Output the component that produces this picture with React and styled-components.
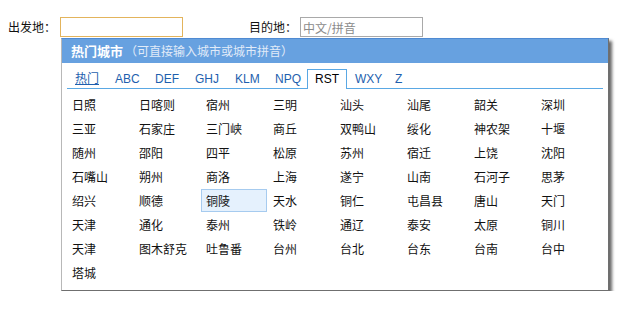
import { useState } from "react";
import styled, { createGlobalStyle } from "styled-components";

const GlobalStyle = createGlobalStyle`
    body {
        margin: 8px;
        background: #fff;
        font-family: "Noto Sans CJK SC", "Liberation Sans", sans-serif;
        font-size: 12px;
        color: #000;
    }
`;

const Page = styled.div`
    display: flex;
    flex-direction: column;
    padding-top: 9px;
`;

const Form = styled.div`
    display: flex;
    align-items: center;
`;

const Field = styled.div`
    display: flex;
    align-items: center;
    margin-right: ${props => props.$gap || 0}px;
`;

const Label = styled.label`
    width: ${props => props.$width}px;
    font-size: 12px;
    line-height: 20px;
    color: #111;
`;

const Input = styled.input`
    box-sizing: border-box;
    width: 123px;
    height: 20px;
    padding: 0 2px;
    margin: 0;
    border: 1px solid ${props => props.$active ? "#e3b45c" : "#a9a9a9"};
    outline: none;
    font-family: "Noto Sans CJK SC", sans-serif;
    font-size: 12px;
    color: #333;

    &::placeholder {
        color: #8a8a8a;
    }
`;

const Popup = styled.div`
    width: 548px;
    box-sizing: border-box;
    margin: 1px 0 0 53px;
    background: #fff;
    border: 1px solid #b8b8b8;
    border-top-color: #4f8ad2;
    border-right-color: #6f6f6f;
    border-bottom-color: #6f6f6f;
    box-shadow: 3px 3px 3px rgba(0, 0, 0, 0.6);
`;

const Header = styled.div`
    height: 24px;
    line-height: 24px;
    padding-left: 9px;
    background: #67a1e0;
    color: #fff;
    white-space: nowrap;
`;

const HeaderTitle = styled.b`
    font-size: 13px;
    font-weight: bold;
`;

const HeaderHint = styled.span`
    font-size: 12px;
    color: #e1ebf8;
    margin-left: 2px;
`;

const Tabs = styled.div`
    display: flex;
    height: 19px;
    margin: 6px 5px 0;
    border-bottom: 1px solid #5aa8e4;
`;

const Tab = styled.div`
    box-sizing: border-box;
    width: 40px;
    height: ${props => props.$active ? 20 : 19}px;
    margin-bottom: ${props => props.$active ? -1 : 0}px;
    padding-left: 7px;
    border: 1px solid ${props => props.$active ? "#5aa8e4" : "transparent"};
    border-bottom: none;
    background: ${props => props.$active ? "#fff" : "transparent"};
    line-height: 18px;
    font-family: "Liberation Sans", "Noto Sans CJK SC", sans-serif;
    font-size: 12px;
    color: ${props => props.$active ? "#000" : "#1e5fae"};
    text-decoration: ${props => props.$underline ? "underline" : "none"};
    cursor: pointer;
    white-space: nowrap;
`;

const Grid = styled.div`
    display: grid;
    grid-template-columns: repeat(8, 66px);
    grid-auto-rows: 23px;
    column-gap: 1px;
    row-gap: 1px;
    margin: 4px 5px 0;
    padding-bottom: 6px;
`;

const City = styled.div`
    box-sizing: border-box;
    height: 23px;
    padding-left: 4px;
    border: 1px solid ${props => props.$hover ? "#a6cbef" : "transparent"};
    background: ${props => props.$hover ? "#e5f1fd" : "transparent"};
    line-height: 21px;
    font-size: 12px;
    color: #111;
    white-space: nowrap;
    cursor: pointer;
`;

const tabs = ["热门", "ABC", "DEF", "GHJ", "KLM", "NPQ", "RST", "WXY", "Z"];

const cities = [
    "日照", "日喀则", "宿州", "三明", "汕头", "汕尾", "韶关", "深圳",
    "三亚", "石家庄", "三门峡", "商丘", "双鸭山", "绥化", "神农架", "十堰",
    "随州", "邵阳", "四平", "松原", "苏州", "宿迁", "上饶", "沈阳",
    "石嘴山", "朔州", "商洛", "上海", "遂宁", "山南", "石河子", "思茅",
    "绍兴", "顺德", "铜陵", "天水", "铜仁", "屯昌县", "唐山", "天门",
    "天津", "通化", "泰州", "铁岭", "通辽", "泰安", "太原", "铜川",
    "天津", "图木舒克", "吐鲁番", "台州", "台北", "台东", "台南", "台中",
    "塔城",
];

export default function App() {
    const [tab, setTab] = useState("RST");

    return (
        <>
            <GlobalStyle />
            <Page>
                <Form>
                    <Field $gap={66}>
                        <Label $width={52}>出发地：</Label>
                        <Input $active />
                    </Field>
                    <Field>
                        <Label $width={51}>目的地：</Label>
                        <Input placeholder="中文/拼音" />
                    </Field>
                </Form>
                <Popup>
                    <Header>
                        <HeaderTitle>热门城市</HeaderTitle>
                        <HeaderHint>（可直接输入城市或城市拼音）</HeaderHint>
                    </Header>
                    <Tabs>
                        {tabs.map(t => (
                            <Tab key={t} $active={t === tab} $underline={t === "热门"} onClick={() => setTab(t)}>
                                {t}
                            </Tab>
                        ))}
                    </Tabs>
                    <Grid>
                        {cities.map((c, i) => (
                            <City key={i} $hover={i === 34}>{c}</City>
                        ))}
                    </Grid>
                </Popup>
            </Page>
        </>
    );
}
